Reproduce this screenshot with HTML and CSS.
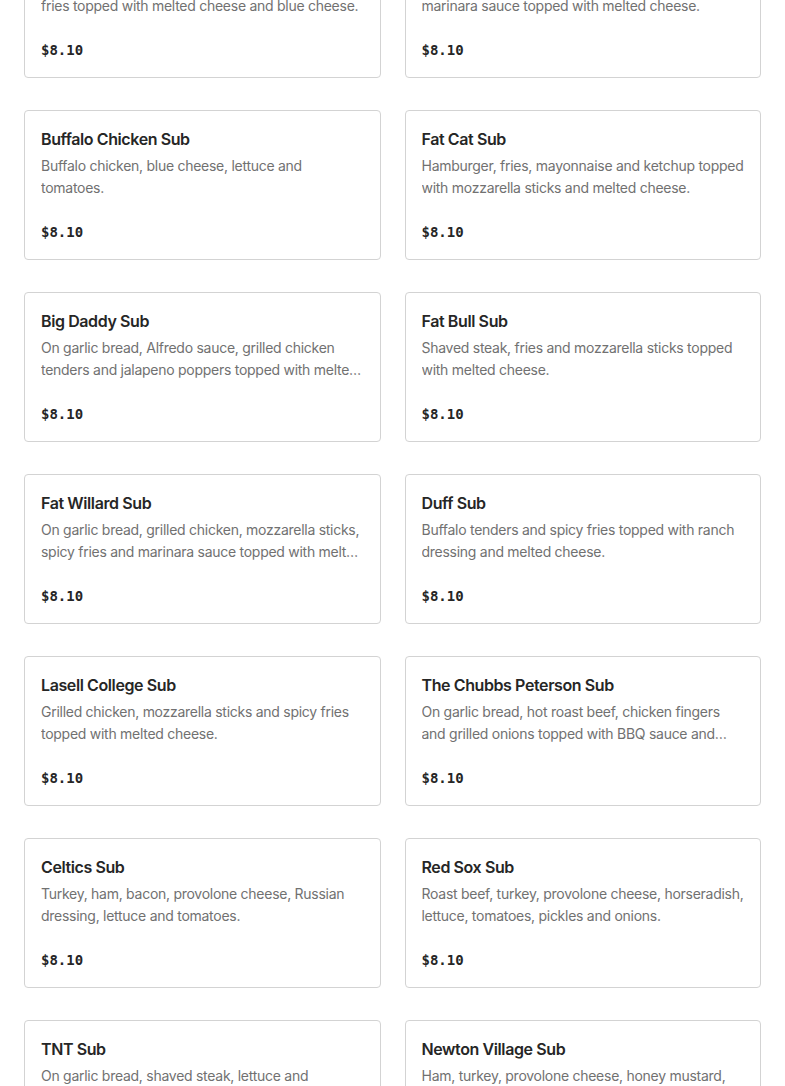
FILE: index.html
```html
<!DOCTYPE html>
<html lang="en">
<head>
<meta charset="utf-8">
<title>Subs</title>
<link rel="stylesheet" href="styles.css">
</head>
<body>
<main class="menu">
  <div class="card"><h3 class="title">Bleu Fries Sub</h3><p class="desc">Buffalo chicken, bacon, mozzarella sticks, spicy fries topped with melted cheese and blue cheese.</p><div class="price">$8.10</div></div>
  <div class="card"><h3 class="title">Chicken Parm Sub</h3><p class="desc">Chicken tenders, mozzarella sticks, fries and marinara sauce topped with melted cheese.</p><div class="price">$8.10</div></div>

  <div class="card"><h3 class="title">Buffalo Chicken Sub</h3><p class="desc">Buffalo chicken, blue cheese, lettuce and tomatoes.</p><div class="price">$8.10</div></div>
  <div class="card"><h3 class="title">Fat Cat Sub</h3><p class="desc">Hamburger, fries, mayonnaise and ketchup topped with mozzarella sticks and melted cheese.</p><div class="price">$8.10</div></div>

  <div class="card"><h3 class="title">Big Daddy Sub</h3><p class="desc">On garlic bread, Alfredo sauce, grilled chicken tenders and jalapeno poppers topped with melted cheese.</p><div class="price">$8.10</div></div>
  <div class="card"><h3 class="title">Fat Bull Sub</h3><p class="desc">Shaved steak, fries and mozzarella sticks topped with melted cheese.</p><div class="price">$8.10</div></div>

  <div class="card"><h3 class="title">Fat Willard Sub</h3><p class="desc">On garlic bread, grilled chicken, mozzarella sticks, spicy fries and marinara sauce topped with melted cheese.</p><div class="price">$8.10</div></div>
  <div class="card"><h3 class="title">Duff Sub</h3><p class="desc">Buffalo tenders and spicy fries topped with ranch dressing and melted cheese.</p><div class="price">$8.10</div></div>

  <div class="card"><h3 class="title">Lasell College Sub</h3><p class="desc">Grilled chicken, mozzarella sticks and spicy fries topped with melted cheese.</p><div class="price">$8.10</div></div>
  <div class="card"><h3 class="title">The Chubbs Peterson Sub</h3><p class="desc">On garlic bread, hot roast beef, chicken fingers and grilled onions topped with BBQ sauce and melted cheese.</p><div class="price">$8.10</div></div>

  <div class="card"><h3 class="title">Celtics Sub</h3><p class="desc">Turkey, ham, bacon, provolone cheese, Russian dressing, lettuce and tomatoes.</p><div class="price">$8.10</div></div>
  <div class="card"><h3 class="title">Red Sox Sub</h3><p class="desc">Roast beef, turkey, provolone cheese, horseradish, lettuce, tomatoes, pickles and onions.</p><div class="price">$8.10</div></div>

  <div class="card"><h3 class="title">TNT Sub</h3><p class="desc">On garlic bread, shaved steak, lettuce and tomatoes topped with melted cheese.</p><div class="price">$8.10</div></div>
  <div class="card"><h3 class="title">Newton Village Sub</h3><p class="desc">Ham, turkey, provolone cheese, honey mustard, lettuce and tomatoes.</p><div class="price">$8.10</div></div>
</main>
</body>
</html>
```
FILE: styles.css
```css
html, body {
  margin: 0;
  padding: 0;
  background: #ffffff;
}
body {
  font-family: "Inter", "Liberation Sans", sans-serif;
  overflow: hidden;
}
.menu {
  display: grid;
  grid-template-columns: 1fr 1fr;
  column-gap: 24px;
  row-gap: 32px;
  padding: 0 24px;
  margin-top: -72px;
}
.card {
  border: 1px solid #d3d3d3;
  border-radius: 4px;
  padding: 16px;
  display: flex;
  flex-direction: column;
  min-width: 0;
}
.title {
  margin: 0;
  font-size: 16px;
  line-height: 24px;
  font-weight: 600;
  letter-spacing: -0.4px;
  color: #262626;
}
.desc {
  margin: 4px 0 0;
  font-size: 14px;
  line-height: 22px;
  letter-spacing: -0.27px;
  height: 44px;
  color: #717171;
  display: -webkit-box;
  -webkit-line-clamp: 2;
  -webkit-box-orient: vertical;
  overflow: hidden;
}
.price {
  margin-top: 22px;
  font-family: "DejaVu Sans Mono", "Liberation Mono", monospace;
  font-weight: bold;
  font-size: 14px;
  line-height: 22px;
  color: #262626;
}
```
